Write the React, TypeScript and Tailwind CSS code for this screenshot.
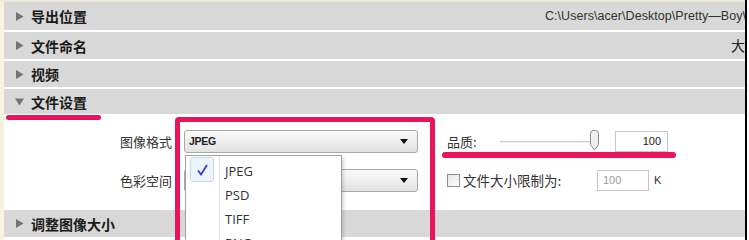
import React from 'react';

const cjk = "font-['Noto_Sans_CJK_SC','Noto_Sans',sans-serif]";

function Arrow({ down }: { down?: boolean }) {
  return (
    <svg width="9" height="9" viewBox="0 0 9 9" className="shrink-0">
      {down ? <path d="M0 1.5h9L4.5 8.5z" fill="#737373" /> : <path d="M1 0v9l7.5-4.5z" fill="#737373" />}
    </svg>
  );
}

function Header({ title, down, h, children }: { title: string; down?: boolean; h: string; children?: React.ReactNode }) {
  return (
    <div className={`${h} bg-[#d8d8d8] flex items-center pl-[11px] overflow-hidden`}>
      <Arrow down={down} />
      <span className={`${cjk} ml-[7px] text-[14px] font-bold text-[#1a1a1a] leading-none`}>{title}</span>
      {children}
    </div>
  );
}

function Select({ value }: { value?: string }) {
  return (
    <div className="h-[23px] rounded-[3px] border border-[#a9a9a9] bg-gradient-to-b from-[#fafafa] to-[#e2e2e2] flex items-center px-[4px]">
      <span className="font-['Liberation_Sans',sans-serif] text-[10.5px] font-bold text-[#222] tracking-[-0.3px]">{value}</span>
      <svg width="8" height="5" viewBox="0 0 8 5" className="ml-auto mr-[5px]">
        <path d="M0 0h8L4 5z" fill="#111" />
      </svg>
    </div>
  );
}

export default function App() {
  return (
    <div className="relative w-[749px] h-[240px] bg-white flex overflow-hidden">
      <div className="w-[745px] flex flex-col bg-[#f7f3dd]">
        <div className="h-[2px] bg-[#f3ebc2]" />
        <div className="h-[2px] bg-[#e9e5ef]" />
        <div className="flex-1 ml-[4px] bg-white flex flex-col gap-[2px]">
          <Header title="导出位置" h="h-[28px]">
            <div className="ml-auto w-[200px] overflow-hidden whitespace-nowrap font-['Liberation_Sans',sans-serif] text-[12.5px] text-[#333] tracking-[0.05px]">
              C:\Users\acer\Desktop\Pretty—Boy\
            </div>
          </Header>
          <Header title="文件命名" h="h-[27px]">
            <div className={`${cjk} ml-auto w-[14px] overflow-hidden whitespace-nowrap text-[14px] text-[#222]`}>大</div>
          </Header>
          <Header title="视频" h="h-[26px]" />
          <Header title="文件设置" down h="h-[25px]" />

          {/* settings body */}
          <div className="h-[92px] pt-[14px]">
            <div className="grid grid-cols-[168px_246px_1fr] grid-rows-[23px_23px] gap-y-[16px]">
              <div className={`${cjk} text-[13px] text-[#333] text-right self-center`}>图像格式</div>
              <div className="ml-[12px]">
                <Select value="JPEG" />
              </div>
              <div className="ml-[29px] flex items-center">
                <span className={`${cjk} w-[53px] text-[13px] text-[#333]`}>品质:</span>
                <div className="relative w-[100px] h-[23px] flex items-center">
                  <div className="w-[92px] h-[2px] bg-[#cfcfcf] border-b border-[#eee]" />
                  <svg width="11" height="21" viewBox="0 0 11 21" className="absolute left-[89px] top-[0px]">
                    <path d="M1.5 3.5a3 3 0 0 1 3-3h2a3 3 0 0 1 3 3v11l-4 5.5-4-5.5z" fill="#f0f0f0" stroke="#8a8a8a" />
                  </svg>
                </div>
                <div className="ml-[15px] w-[53px] h-[21px] border border-[#c6c6c6] bg-white flex items-center justify-end pr-[6px] font-['Liberation_Sans',sans-serif] text-[11px] text-[#222]">
                  100
                </div>
              </div>

              <div className={`${cjk} text-[13px] text-[#333] text-right self-center`}>色彩空间</div>
              <div className="ml-[12px]">
                <Select />
              </div>
              <div className="ml-[29px] flex items-center">
                <div className="w-[13px] h-[13px] border border-[#8f8f8f] bg-gradient-to-br from-[#e6e6e6] to-[#fdfdfd]" />
                <span className={`${cjk} ml-[3px] w-[134px] text-[13.5px] text-[#333]`}>文件大小限制为:</span>
                <div className="w-[52px] h-[21px] border border-[#c6c6c6] bg-white flex items-center pl-[5px] font-['Liberation_Sans',sans-serif] text-[11px] text-[#9a9a9a]">
                  100
                </div>
                <span className="ml-[5px] font-['Liberation_Sans',sans-serif] text-[11px] text-[#333]">K</span>
              </div>
            </div>
          </div>

          <Header title="调整图像大小" h="h-[27px]" />
          <div className="h-[1px]" />
        </div>
      </div>
      <div className="w-[2px] bg-black" />

      {/* open format dropdown */}
      <div className="absolute left-[185px] top-[155px] w-[157px] h-[100px] bg-white border border-[#a3a3a3] shadow-[2px_2px_3px_rgba(0,0,0,0.15)] flex">
        <div className="w-[34px] border-r border-[#e2e2e2] pt-[1px] pl-[4px]">
          <div className="w-[24px] h-[25px] rounded-[3px] border border-[#c5d6ee] bg-[#eef3fb] flex items-center justify-center">
            <svg width="11" height="12" viewBox="0 0 11 12">
              <path d="M1 6.5l3 4L10 1" fill="none" stroke="#3a3fcf" strokeWidth="1.8" />
            </svg>
          </div>
        </div>
        <div className="flex flex-col pl-[5px] pt-[3px] font-['Open_Sans',sans-serif] text-[13px] text-[#333]">
          <div className="h-[24px] leading-[24px]">JPEG</div>
          <div className="h-[24px] leading-[24px]">PSD</div>
          <div className="h-[24px] leading-[24px]">TIFF</div>
          <div className="h-[24px] leading-[24px]">PNG</div>
        </div>
      </div>

      {/* red annotations */}
      <div className="absolute left-[6px] top-[115px] w-[95px] h-[5px] rounded-full bg-[#ec1459]" />
      <div className="absolute left-[175px] top-[117px] w-[260px] h-[140px] rounded-[4px] border-[5px] border-[#ec1459]" />
      <div className="absolute left-[442px] top-[152px] w-[234px] h-[6px] rounded-full bg-[#ec1459]" />
    </div>
  );
}
